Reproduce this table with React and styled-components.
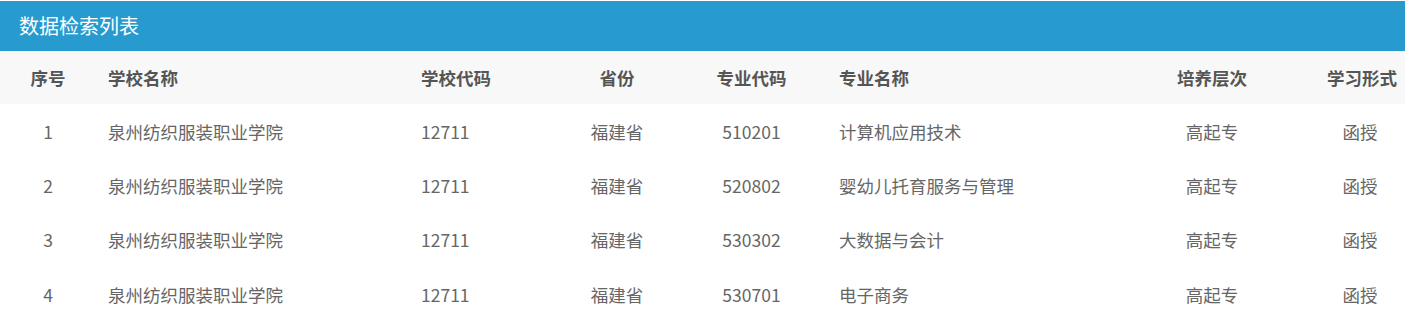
import styled, { createGlobalStyle } from "styled-components";

const GlobalStyle = createGlobalStyle`
  body{
    margin: 0;
    background: #fff;
    font-family: "Noto Sans CJK SC", "Noto Sans", sans-serif;
  }
`;

const COLS = "96px 313px 151px 114px 155px 280px 206px 90px";

const StyledPanel = styled.div`
  width: 1405px;
  padding-top: 1px;
  box-sizing: border-box;
`;

const StyledTitle = styled.div`
  height: 50px;
  background: #279bcf;
  color: #fff;
  font-size: 20px;
  line-height: 50px;
  padding-left: 19px;
`;

const StyledTable = styled.div`
  border-left: 1px solid #e6e6e6;
`;

const StyledRow = styled.div`
  display: grid;
  grid-template-columns: ${COLS};
  height: ${(p) => (p.$head ? "53px" : "54.3px")};
  align-items: center;
  margin-left: -1px;
  background: ${(p) => (p.$head ? "#f8f8f8" : "#fff")};
  color: ${(p) => (p.$head ? "#555" : "#666")};
  font-size: 17.5px;
  font-weight: ${(p) => (p.$head ? 700 : 400)};
`;

const StyledCell = styled.div`
  padding: 0 12px;
  white-space: nowrap;
  text-align: ${(p) => (p.$center ? "center" : "left")};
  &.tight{
    padding-left: 10px;
  }
`;

const columns = [
  { label: "序号", key: "no", center: true },
  { label: "学校名称", key: "school" },
  { label: "学校代码", key: "code" },
  { label: "省份", key: "prov", center: true },
  { label: "专业代码", key: "major", center: true },
  { label: "专业名称", key: "name", tight: true },
  { label: "培养层次", key: "level", center: true },
  { label: "学习形式", key: "form", center: true },
];

const rows = [
  { no: 1, major: "510201", name: "计算机应用技术" },
  { no: 2, major: "520802", name: "婴幼儿托育服务与管理" },
  { no: 3, major: "530302", name: "大数据与会计" },
  { no: 4, major: "530701", name: "电子商务" },
].map((r) => ({
  ...r,
  school: "泉州纺织服装职业学院",
  code: "12711",
  prov: "福建省",
  level: "高起专",
  form: "函授",
}));

const App = () => {
  return (
    <>
      <GlobalStyle />
      <StyledPanel>
        <StyledTitle>数据检索列表</StyledTitle>
        <StyledTable>
          <StyledRow $head>
            {columns.map((c) => (
              <StyledCell key={c.key} $center={c.center} className={c.tight ? "tight" : ""}>
                {c.label}
              </StyledCell>
            ))}
          </StyledRow>
          {rows.map((r) => (
            <StyledRow key={r.no}>
              {columns.map((c) => (
                <StyledCell key={c.key} $center={c.center} className={c.tight ? "tight" : ""}>
                  {r[c.key]}
                </StyledCell>
              ))}
            </StyledRow>
          ))}
        </StyledTable>
      </StyledPanel>
    </>
  );
};

export default App;
